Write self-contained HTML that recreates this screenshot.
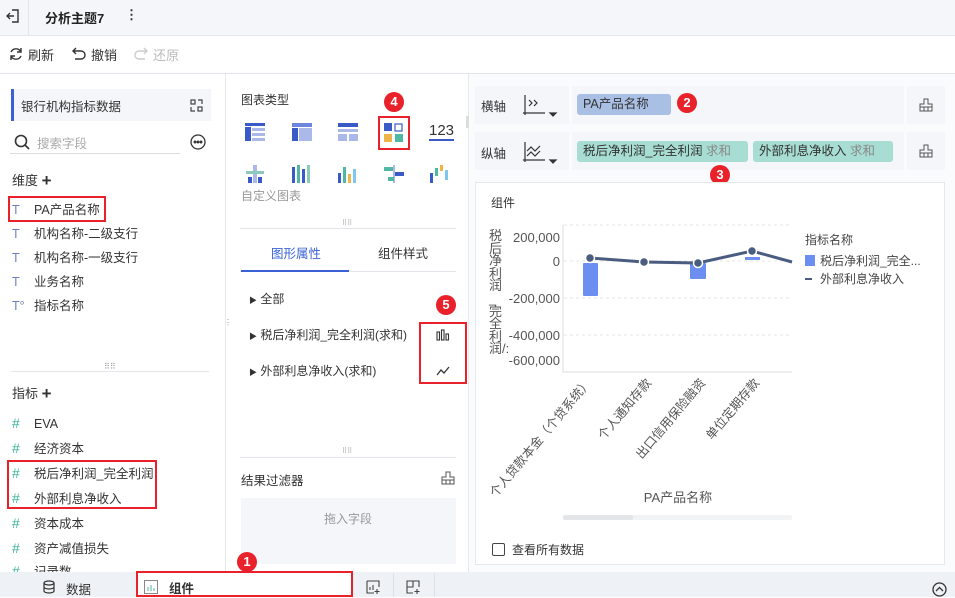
<!DOCTYPE html>
<html><head><meta charset="utf-8"><style>
*{margin:0;padding:0;box-sizing:border-box}
body{width:955px;height:597px;overflow:hidden;font-family:"Liberation Sans","Noto Sans CJK SC",sans-serif;font-size:12px;color:#333;background:#fff;position:relative}
.a{position:absolute}
.red{position:absolute;border:2px solid #e8212a}
.num{position:absolute;width:20px;height:20px;border-radius:50%;background:#e8212a;color:#fff;font-size:13px;font-weight:bold;text-align:center;line-height:20px}
.fld{position:absolute;left:12px;font-size:12.5px;color:#333;line-height:16px}
.fld i{font-style:normal;display:inline-block;width:22px;color:#6d7fc2}
.fld b{font-weight:normal;display:inline-block;width:22px;color:#3bb39b;font-size:14px}
</style></head><body>
<div class="a" style="left:0;top:0;width:955px;height:36px;background:#f5f6f9;border-bottom:1px solid #e3e5ea"></div>
<div class="a" style="left:28px;top:0;width:1px;height:36px;background:#e3e5ea"></div>
<svg class="a" style="left:6px;top:9px" width="14" height="14" viewBox="0 0 14 14" fill="none" stroke="#333" stroke-width="1.4"><path d="M6 1h6v12H6M1 7h7M4 4L1 7l3 3"/></svg>
<div class="a" style="left:45px;top:8px;font-size:13px;font-weight:bold;color:#222">分析主题7</div>
<div class="a" style="left:125px;top:7px;font-size:13px;font-weight:bold">⋮</div>
<div class="a" style="left:0;top:73px;width:955px;height:1px;background:#e3e5ea"></div>
<svg class="a" style="left:9px;top:47px" width="14" height="14" viewBox="0 0 14 14" fill="none" stroke="#333" stroke-width="1.4"><path d="M12 5A5.5 5.5 0 0 0 2 5M2 9a5.5 5.5 0 0 0 10 0M12 1v4H8M2 13V9h4"/></svg>
<div class="a" style="left:28px;top:45px;font-size:13px">刷新</div>
<svg class="a" style="left:72px;top:47px" width="14" height="14" viewBox="0 0 14 14" fill="none" stroke="#333" stroke-width="1.4"><path d="M1 4h8a4 4 0 0 1 0 8H3M4 1L1 4l3 3"/></svg>
<div class="a" style="left:91px;top:45px;font-size:13px">撤销</div>
<svg class="a" style="left:134px;top:47px" width="14" height="14" viewBox="0 0 14 14" fill="none" stroke="#ccc" stroke-width="1.4"><path d="M13 4H5a4 4 0 0 0 0 8h6M10 1l3 3-3 3"/></svg>
<div class="a" style="left:153px;top:45px;font-size:13px;color:#bbb">还原</div>
<div class="a" style="left:225px;top:74px;width:1px;height:498px;background:#e6e8ec"></div>
<div class="a" style="left:11px;top:89px;width:200px;height:32px;background:#f5f6f9;border-left:3px solid #3a62d6"></div>
<div class="a" style="left:21px;top:96px;font-size:12.5px">银行机构指标数据</div>
<svg class="a" style="left:190px;top:99px" width="13" height="13" viewBox="0 0 13 13" fill="none" stroke="#444" stroke-width="1.2"><rect x="1" y="1" width="4" height="4"/><rect x="8" y="8" width="4" height="4"/><path d="M8 1h4v4M1 8v4h4"/></svg>
<svg class="a" style="left:14px;top:134px" width="16" height="16" viewBox="0 0 16 16" fill="none" stroke="#333" stroke-width="1.6"><circle cx="7" cy="7" r="5.5"/><path d="M11 11l4 4"/></svg>
<div class="a" style="left:37px;top:133px;font-size:12.5px;color:#aaa">搜索字段</div>
<div class="a" style="left:10px;top:153px;width:170px;height:1px;background:#ddd"></div>
<svg class="a" style="left:190px;top:134px" width="16" height="16" viewBox="0 0 16 16" fill="none" stroke="#333" stroke-width="1.3"><circle cx="8" cy="8" r="7"/><circle cx="5" cy="8" r=".8" fill="#333"/><circle cx="8" cy="8" r=".8" fill="#333"/><circle cx="11" cy="8" r=".8" fill="#333"/></svg>
<div class="a" style="left:12px;top:170px;font-size:13px">维度 <span style="font-size:17px;font-weight:bold;position:relative;top:1px">+</span></div>
<div class="fld" style="top:202px"><i>T</i>PA产品名称</div>
<div class="fld" style="top:226px"><i>T</i>机构名称-二级支行</div>
<div class="fld" style="top:250px"><i>T</i>机构名称-一级支行</div>
<div class="fld" style="top:274px"><i>T</i>业务名称</div>
<div class="fld" style="top:298px"><i>T°</i>指标名称</div>
<div class="red" style="left:8px;top:196px;width:98px;height:26px"></div>
<div class="a" style="left:104px;top:362px;font-size:8px;color:#999">⠿⠿</div>
<div class="a" style="left:11px;top:371px;width:198px;height:1px;background:#e3e5ea"></div>
<div class="a" style="left:12px;top:383px;font-size:13px">指标 <span style="font-size:17px;font-weight:bold;position:relative;top:1px">+</span></div>
<div class="fld" style="top:415px"><b>#</b>EVA</div>
<div class="fld" style="top:440px"><b>#</b>经济资本</div>
<div class="fld" style="top:465px"><b>#</b>税后净利润_完全利润</div>
<div class="fld" style="top:490px"><b>#</b>外部利息净收入</div>
<div class="fld" style="top:515px"><b>#</b>资本成本</div>
<div class="fld" style="top:540px"><b>#</b>资产减值损失</div>
<div class="fld" style="top:563px"><b>#</b>记录数</div>
<div class="red" style="left:7px;top:460px;width:150px;height:49px"></div>
<div class="a" style="left:224px;top:318px;font-size:8px;color:#999">⋮</div>
<div class="a" style="left:468px;top:74px;width:1px;height:498px;background:#e6e8ec"></div>
<div class="a" style="left:241px;top:91px;font-size:12px">图表类型</div>
<svg class="a" style="left:245px;top:123px" width="20" height="18"><rect x="0" y="0" width="20" height="3" fill="#3a5bc7"/><rect x="0" y="4" width="6" height="14" fill="#3a5bc7"/><rect x="7" y="5" width="13" height="3" fill="#aab9ea"/><rect x="7" y="10" width="13" height="3" fill="#aab9ea"/><rect x="7" y="15" width="13" height="3" fill="#aab9ea"/></svg>
<svg class="a" style="left:292px;top:123px" width="20" height="18"><rect x="0" y="0" width="20" height="4" fill="#6d85dd"/><rect x="0" y="5" width="6" height="13" fill="#3a5bc7"/><rect x="7" y="5" width="13" height="13" fill="#aab9ea"/></svg>
<svg class="a" style="left:338px;top:123px" width="20" height="18"><rect x="0" y="0" width="20" height="4" fill="#3a5bc7"/><rect x="0" y="6" width="20" height="3" fill="#aab9ea"/><rect x="0" y="11" width="9" height="7" fill="#aab9ea"/><rect x="11" y="11" width="9" height="7" fill="#aab9ea"/></svg>
<svg class="a" style="left:384px;top:123px" width="20" height="20"><rect x="0" y="0" width="8" height="8" fill="#3a5bc7"/><rect x="11" y="1" width="7" height="7" fill="none" stroke="#3a5bc7" stroke-width="1.2"/><rect x="0" y="11" width="8" height="8" fill="#f0b54a"/><rect x="11" y="11" width="8" height="8" fill="#4fb7a4"/></svg>
<div class="red" style="left:378px;top:116px;width:32px;height:34px"></div>
<div class="num" style="left:384px;top:92px">4</div>
<div class="a" style="left:429px;top:123px;font-size:15px;color:#333;border-bottom:2px solid #3a5bc7;line-height:16px">123</div>
<div class="a" style="left:466px;top:116px;width:3px;height:12px;background:#ddd"></div>
<svg class="a" style="left:246px;top:165px" width="18" height="18"><rect x="7" y="0" width="4" height="18" fill="#aab9ea"/><rect x="0" y="6" width="18" height="3" fill="#8ac9bb"/><rect x="2" y="12" width="4" height="6" fill="#3a5bc7"/><rect x="12" y="12" width="4" height="6" fill="#3a5bc7"/></svg>
<svg class="a" style="left:292px;top:165px" width="20" height="18"><rect x="0" y="2" width="3" height="16" fill="#3a5bc7"/><rect x="5" y="0" width="3" height="18" fill="#4fb7a4"/><rect x="10" y="4" width="3" height="14" fill="#3a5bc7"/><rect x="15" y="0" width="3" height="18" fill="#8ac9bb"/></svg>
<svg class="a" style="left:338px;top:165px" width="20" height="18"><rect x="0" y="8" width="3" height="10" fill="#3a5bc7"/><rect x="5" y="2" width="3" height="16" fill="#4fb7a4"/><rect x="10" y="9" width="3" height="9" fill="#f0b54a"/><rect x="15" y="4" width="3" height="14" fill="#7ec8f0"/></svg>
<svg class="a" style="left:384px;top:165px" width="20" height="18"><rect x="9" y="0" width="2" height="18" fill="#aab9ea"/><rect x="0" y="2" width="9" height="4" fill="#4fb7a4"/><rect x="11" y="7" width="9" height="4" fill="#3a5bc7"/><rect x="4" y="12" width="6" height="4" fill="#4fb7a4"/></svg>
<svg class="a" style="left:430px;top:165px" width="20" height="18"><rect x="0" y="8" width="3" height="10" fill="#3a5bc7"/><rect x="5" y="3" width="3" height="8" fill="#4fb7a4"/><rect x="10" y="0" width="3" height="6" fill="#f0b54a"/><rect x="15" y="5" width="3" height="10" fill="#7ec8f0"/></svg>
<div class="a" style="left:241px;top:187px;font-size:12px;color:#999">自定义图表</div>
<div class="a" style="left:342px;top:219px;font-size:7px;color:#999">⠿⠿</div>
<div class="a" style="left:240px;top:228px;width:216px;height:1px;background:#e3e5ea"></div>
<div class="a" style="left:271px;top:243px;font-size:12.5px;color:#3a62d6">图形属性</div>
<div class="a" style="left:378px;top:243px;font-size:12.5px">组件样式</div>
<div class="a" style="left:240px;top:271px;width:216px;height:1px;background:#e3e5ea"></div>
<div class="a" style="left:241px;top:270px;width:108px;height:2px;background:#3a62d6"></div>
<div class="a" style="left:249px;top:290px;font-size:12px"><span style="font-size:8px">▶</span> 全部</div>
<div class="a" style="left:249px;top:326px;font-size:12px"><span style="font-size:8px">▶</span> 税后净利润_完全利润(求和)</div>
<div class="a" style="left:249px;top:362px;font-size:12px"><span style="font-size:8px">▶</span> 外部利息净收入(求和)</div>
<svg class="a" style="left:436px;top:329px" width="14" height="12" fill="none" stroke="#333" stroke-width="1.1"><rect x="1" y="3" width="2.5" height="8"/><rect x="5.5" y="1" width="2.5" height="10"/><rect x="10" y="5" width="2.5" height="6"/></svg>
<svg class="a" style="left:436px;top:365px" width="14" height="12" fill="none" stroke="#333" stroke-width="1.3"><path d="M1 10l4-5 3 3 5-6"/></svg>
<div class="red" style="left:419px;top:322px;width:48px;height:62px"></div>
<div class="num" style="left:436px;top:295px">5</div>
<div class="a" style="left:342px;top:447px;font-size:7px;color:#999">⠿⠿</div>
<div class="a" style="left:240px;top:457px;width:216px;height:1px;background:#e3e5ea"></div>
<div class="a" style="left:241px;top:470px;font-size:12.5px">结果过滤器</div>
<svg class="a" style="left:441px;top:471px" width="14" height="14" fill="none" stroke="#555" stroke-width="1"><path d="M5 1h4v5h4v7H1V6h4zM1 9h12M5 9v4M9 9v4"/></svg>
<div class="a" style="left:241px;top:498px;width:215px;height:66px;background:#f5f6f9"></div>
<div class="a" style="left:324px;top:510px;font-size:12px;color:#999">拖入字段</div>
<div class="a" style="left:469px;top:74px;width:486px;height:498px;background:#fafbfc"></div>
<div class="a" style="left:475px;top:86px;width:94px;height:38px;background:#f4f6fa"></div>
<div class="a" style="left:572px;top:86px;width:332px;height:38px;background:#f4f6fa"></div>
<div class="a" style="left:907px;top:86px;width:38px;height:38px;background:#f4f6fa"></div>
<div class="a" style="left:475px;top:132px;width:94px;height:38px;background:#f4f6fa"></div>
<div class="a" style="left:572px;top:132px;width:332px;height:38px;background:#f4f6fa"></div>
<div class="a" style="left:907px;top:132px;width:38px;height:38px;background:#f4f6fa"></div>
<div class="a" style="left:481px;top:96px;font-size:12.5px">横轴</div>
<div class="a" style="left:481px;top:143px;font-size:12.5px">纵轴</div>
<svg class="a" style="left:522px;top:94px" width="36" height="24" fill="none" stroke="#333" stroke-width="1.2"><path d="M3 1v20M1 19h22M7 6l3 3-3 3M12 6l3 3-3 3"/><path d="M28 19l3 3 3-3z" fill="#333"/></svg>
<svg class="a" style="left:522px;top:141px" width="36" height="24" fill="none" stroke="#333" stroke-width="1.2"><path d="M3 1v20M1 19h22M5 10l4-4 4 4 5-5M5 15l4-4 4 4 5-5"/><path d="M28 19l3 3 3-3z" fill="#333"/></svg>
<div class="a" style="left:577px;top:94px;width:94px;height:21px;background:#a9bfe4;border-radius:3px;padding:1px 6px;font-size:12.5px;line-height:18px">PA产品名称</div>
<div class="num" style="left:677px;top:93px">2</div>
<div class="a" style="left:577px;top:141px;width:171px;height:21px;background:#a7ddd2;border-radius:3px;padding:1px 6px;font-size:12.5px;line-height:18px;white-space:nowrap">税后净利润_完全利润 <span style="color:#888">求和</span></div>
<div class="a" style="left:753px;top:141px;width:140px;height:21px;background:#a7ddd2;border-radius:3px;padding:1px 6px;font-size:12.5px;line-height:18px;white-space:nowrap">外部利息净收入 <span style="color:#888">求和</span></div>
<div class="num" style="left:710px;top:165px">3</div>
<svg class="a" style="left:919px;top:98px" width="14" height="14" fill="none" stroke="#555" stroke-width="1"><path d="M5 1h4v5h4v7H1V6h4zM1 9h12M5 9v4M9 9v4"/></svg>
<svg class="a" style="left:919px;top:144px" width="14" height="14" fill="none" stroke="#555" stroke-width="1"><path d="M5 1h4v5h4v7H1V6h4zM1 9h12M5 9v4M9 9v4"/></svg>
<div class="a" style="left:475px;top:182px;width:470px;height:383px;background:#fff;border:1px solid #e6e8ec"></div>
<div class="a" style="left:491px;top:194px;font-size:12px">组件</div>
<div class="a" style="left:489px;top:230px;width:14px;font-size:13px;line-height:12.6px;color:#555">税后净利润_完全利润/:</div>
<svg class="a" style="left:475px;top:220px" width="470" height="310" font-family="Liberation Sans" font-size="13" fill="#555">
<g stroke="#e5e5e5" stroke-dasharray="3,3"><path d="M89 41H317M89 78H317M89 115H317M89 5H317"/></g>
<path d="M88 5V152H317" stroke="#ddd" fill="none"/>
<g text-anchor="end"><text x="85" y="22">200,000</text><text x="85" y="46">0</text><text x="85" y="83">-200,000</text><text x="85" y="120">-400,000</text><text x="85" y="145">-600,000</text></g>
<rect x="108" y="43" width="15" height="33" fill="#6b8ef0" rx="1"/>
<rect x="215" y="43" width="16" height="16" fill="#6b8ef0" rx="1"/>
<rect x="270" y="37" width="15" height="3" fill="#6b8ef0"/>
<polyline points="115,38 169,42 223,43 277,31 317,42" fill="none" stroke="#4a5d80" stroke-width="3"/>
<g fill="#4a5d80" stroke="#fff" stroke-width="1.5"><circle cx="115" cy="38" r="4.5"/><circle cx="169" cy="42" r="4.5"/><circle cx="223" cy="43" r="4.5"/><circle cx="277" cy="31" r="4.5"/></g>
<g font-size="12.5" fill="#555">
<text transform="translate(117,163) rotate(-50)" text-anchor="end">个人贷款本金（个贷系统）</text>
<text transform="translate(177,163) rotate(-50)" text-anchor="end">个人通知存款</text>
<text transform="translate(231,163) rotate(-50)" text-anchor="end">出口信用保险融资</text>
<text transform="translate(285,163) rotate(-50)" text-anchor="end">单位定期存款</text>
</g>
<text x="203" y="282" text-anchor="middle" font-size="13">PA产品名称</text>
<rect x="88" y="295" width="229" height="5" fill="#f2f3f5" rx="2"/>
<rect x="88" y="295" width="70" height="5" fill="#e3e5e9" rx="2"/>
<text x="330" y="24" font-size="12" fill="#444">指标名称</text>
<rect x="330" y="35" width="10" height="11" fill="#6b8ef0"/>
<text x="345" y="45" font-size="12" fill="#444">税后净利润_完全...</text>
<rect x="330" y="58" width="7" height="2" fill="#4a5d80"/>
<text x="345" y="63" font-size="12" fill="#444">外部利息净收入</text>
</svg>
<div class="a" style="left:492px;top:543px;width:13px;height:13px;border:1px solid #444;border-radius:2px"></div>
<div class="a" style="left:512px;top:541px;font-size:12px">查看所有数据</div>
<div class="a" style="left:0;top:572px;width:955px;height:25px;background:#eef1f5"></div>
<svg class="a" style="left:42px;top:580px" width="14" height="14" fill="none" stroke="#333" stroke-width="1.2"><ellipse cx="7" cy="3" rx="5" ry="2"/><path d="M2 3v8c0 1 2 2 5 2s5-1 5-2V3M2 7c0 1 2 2 5 2s5-1 5-2"/></svg>
<div class="a" style="left:66px;top:579px;font-size:12.5px">数据</div>
<div class="a" style="left:137px;top:573px;width:215px;height:24px;background:#fff"></div>
<svg class="a" style="left:144px;top:580px" width="14" height="14" fill="none" stroke="#888" stroke-width="1"><rect x=".5" y=".5" width="13" height="13"/><path d="M4 11V7M7 11V5M10 11V8" stroke="#4fb7a4"/></svg>
<div class="a" style="left:169px;top:578px;font-size:12.5px;font-weight:bold">组件</div>
<div class="red" style="left:136px;top:571px;width:217px;height:26px"></div>
<div class="num" style="left:237px;top:552px">1</div>
<svg class="a" style="left:366px;top:580px" width="14" height="14" fill="none" stroke="#444" stroke-width="1.1"><path d="M1 1h12v6M1 1v12h7M4 10V7M7 10V5M11 9v5M8.5 11.5h5"/></svg>
<div class="a" style="left:393px;top:573px;width:1px;height:24px;background:#dde0e5"></div>
<svg class="a" style="left:406px;top:580px" width="14" height="14" fill="none" stroke="#444" stroke-width="1.1"><path d="M1 1h6v6H1zM7 1h6v6M1 7v6h6M11 9v5M8.5 11.5h5"/></svg>
<div class="a" style="left:434px;top:573px;width:1px;height:24px;background:#dde0e5"></div>
<svg class="a" style="left:932px;top:582px" width="15" height="15" fill="none" stroke="#333" stroke-width="1.3"><circle cx="7.5" cy="7.5" r="6.5"/><path d="M4 9l3.5-3.5L11 9"/></svg>
</body></html>
